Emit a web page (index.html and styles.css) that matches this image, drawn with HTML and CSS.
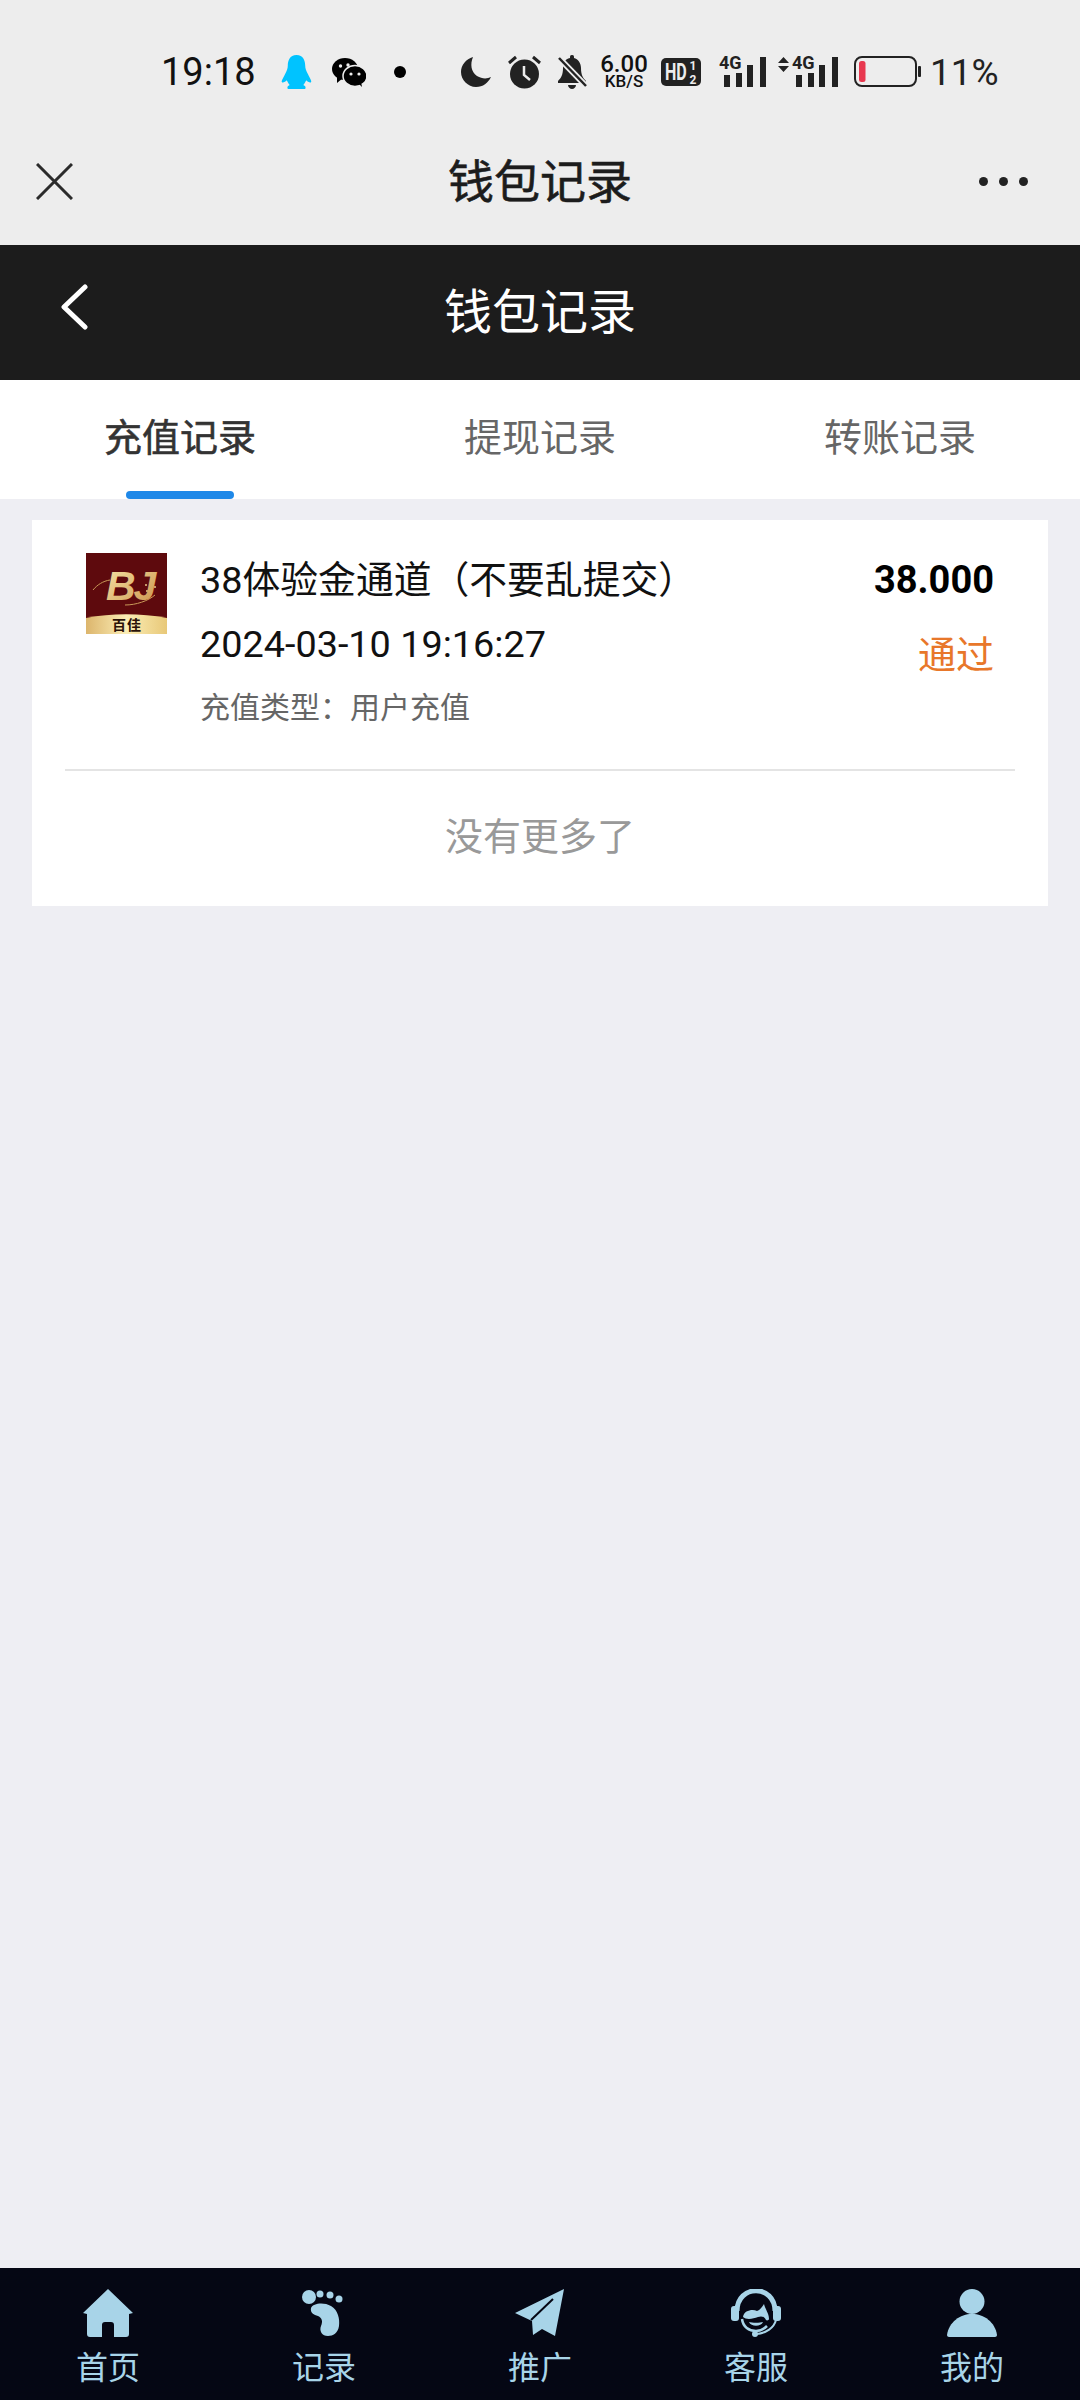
FILE: index.html
```html
<!doctype html>
<html lang="zh-CN">
<head>
    <meta charset="UTF-8">
    <meta name="viewport" content="width=device-width, initial-scale=1.0">
    <title>钱包记录</title>
    <link rel="stylesheet" href="styles.css">
</head>
<body>
<div class="page">
    <!-- status bar -->
    <div class="status">
        <span class="time">19:18</span>
        <svg class="st-qq" width="31" height="34" viewBox="0 0 32 35"><path fill="#00c3ff" d="M16 0C9 0 7 6 7 11C7 14 6 16 4 20C2 24 0 27 1 28C2 29 5 27 6 26C7 28 8 30 9 31C7 32 6 33 7 35H25C26 33 25 32 23 31C24 30 25 28 26 26C27 27 30 29 31 28C32 27 30 24 28 20C26 16 25 14 25 11C25 6 23 0 16 0Z"/></svg>
        <svg class="st-wx" width="34" height="29" viewBox="0 0 34 29"><ellipse cx="13" cy="11" rx="13" ry="11"/><path d="M5 18L5 25L11 20Z"/><ellipse cx="23" cy="18" rx="12" ry="10.500" fill="#000" stroke="#ededed" stroke-width="1.500"/><path d="M27 26L30 29L29 24Z"/><circle cx="8.500" cy="8" r="1.700" fill="#ededed"/><circle cx="16" cy="7" r="1.700" fill="#ededed"/><circle cx="19" cy="16" r="1.600" fill="#ededed"/><circle cx="27" cy="16" r="1.600" fill="#ededed"/></svg>
        <span class="st-dot"></span>
        <svg class="st-moon" width="30" height="30" viewBox="0 0 30 30"><path fill="#222" d="M12 0C5 2 0 8 0 15C0 23 7 30 15 30C22 30 27 26 30 20C26 22 21 22 16 19C10 15 9 7 12 0Z"/></svg>
        <svg class="st-alarm" width="33" height="34" viewBox="0 0 33 34"><circle cx="16.500" cy="19" r="14.500" fill="#222"/><path d="M1 8L8 2M32 8L25 2" stroke="#222" stroke-width="3"/><path d="M16 11V20L22 25" fill="none" stroke="#ededed" stroke-width="2.500"/></svg>
        <svg class="st-bell" width="31" height="34" viewBox="0 0 31 34"><path fill="#222" d="M15 0C13 0 13 1 13 3C8 4 6 8 6 13C6 20 4 23 1 26V28H29V26C26 23 24 20 24 13C24 8 21 4 17 3C17 1 17 0 15 0Z"/><path d="M11 30H19C19 32 17 34 15 34C13 34 11 32 11 30Z" fill="#222"/><path d="M2 3L29 31" stroke="#ededed" stroke-width="6"/><path d="M2 3L29 31" stroke="#222" stroke-width="2.500"/></svg>
        <div class="st-speed"><span class="num">6.00</span><span class="unit">KB/S</span></div>
        <svg class="st-hd" width="40" height="28" viewBox="0 0 40 28"><rect width="40" height="28" rx="5" fill="#222"/><text transform="translate(4 22) scale(.67 1)" class="hd-txt">HD</text><text x="32" y="11.500" class="hd-sub">1</text><text x="32" y="26" class="hd-sub">2</text></svg>
        <svg class="st-4g" width="47" height="40" viewBox="0 -8 47 40"><text x="0" y="13" class="g-txt">4G</text><path fill="#222" d="M5 19h6v12h-6zM17 17h6v14h-6zM28 9h6v22h-6zM41 1h6v30h-6z"/></svg>
        <svg class="st-4g2" width="60" height="40" viewBox="0 -8 60 40"><path fill="#222" d="M0 7L5.500 1L11 7ZM0 10H11L5.500 16Z"/><text x="14" y="13" class="g-txt">4G</text><path fill="#222" d="M18 19h6v12h-6zM30 17h6v14h-6zM41 9h6v22h-6zM54 1h6v30h-6z"/></svg>
        <svg class="st-bat" width="67" height="32" viewBox="0 0 67 32"><rect x="1" y="1" width="61" height="29" rx="7" fill="none" stroke="#222" stroke-width="2"/><rect x="5" y="5" width="6.500" height="21" rx="2.500" fill="#e8384f"/><rect x="64" y="10" width="3" height="11" rx="1" fill="#222"/></svg>
        <span class="pct">11%</span>
    </div>

    <!-- webview title -->
    <div class="webbar">
        <div class="webbar-left">
            <svg width="37" height="37" viewBox="0 0 37 37"><path d="M1 1L36 36M36 1L1 36" stroke="#2b2b2b" stroke-width="3"/></svg>
        </div>
        <div class="webbar-title">钱包记录</div>
        <div class="webbar-right"><i></i><i></i><i></i></div>
    </div>

    <!-- page head -->
    <div class="head">
        <svg class="head-back" width="28" height="46" viewBox="0 0 28 46"><path d="M25 3L4 23L25 43" fill="none" stroke="#fff" stroke-width="5" stroke-linecap="round" stroke-linejoin="round"/></svg>
        <div class="head-title">钱包记录</div>
    </div>

    <ul class="tabs">
        <li class="tab on">充值记录</li>
        <li class="tab">提现记录</li>
        <li class="tab">转账记录</li>
    </ul>

    <div class="main">
        <div class="card">
            <div class="row">
                <svg class="logo" width="81" height="81" viewBox="0 0 81 81">
                    <defs>
                        <linearGradient id="gold" x1="0" y1="0" x2="1" y2="1"><stop offset="0" stop-color="#f8e7a8"/><stop offset="1" stop-color="#c98f48"/></linearGradient>
                        <linearGradient id="band" x1="0" y1="0" x2="1" y2="0"><stop offset="0" stop-color="#dcb56c"/><stop offset="0.5" stop-color="#fbedb5"/><stop offset="1" stop-color="#e8c878"/></linearGradient>
                    </defs>
                    <rect width="81" height="81" fill="#5e0a0d"/>
                    <path d="M7 37C11 32 17 28 24 27M39 52C50 52 62 48 69 42" fill="none" stroke="#c99a58" stroke-width="1"/>
                    <g fill="#e6c98a"><circle cx="60" cy="32" r="1"/><circle cx="65" cy="35" r="1"/><circle cx="61" cy="38" r="1"/><circle cx="69" cy="34" r="1"/></g>
                    <text x="20" y="47" class="logo-bj" fill="url(#gold)">BJ</text>
                    <path d="M0 65C25 60 55 60 81 65V81H0Z" fill="url(#band)"/>
                    <text x="41" y="77" class="logo-cn">百佳</text>
                </svg>
                <div class="info">
                    <p class="info-title">38体验金通道（不要乱提交）</p>
                    <p class="info-date">2024-03-10 19:16:27</p>
                    <p class="info-type">充值类型：用户充值</p>
                </div>
                <div class="side">
                    <p class="amount">38.000</p>
                    <p class="state">通过</p>
                </div>
            </div>
            <div class="nomore">没有更多了</div>
        </div>
    </div>

    <!-- bottom nav -->
    <ul class="foot">
        <li>
            <svg width="50" height="48" viewBox="0 0 50 48"><path d="M25 0L50 24L46 25V45a3 3 0 0 1-3 3H31V36a3 3 0 0 0-3-3h-6a3 3 0 0 0-3 3V48H7a3 3 0 0 1-3-3V25L0 24Z"/></svg>
            <span>首页</span>
        </li>
        <li>
            <svg width="50" height="48" viewBox="0 0 50 48"><circle cx="10" cy="8" r="7"/><circle cx="21" cy="5" r="3.500"/><circle cx="31" cy="6" r="3.500"/><circle cx="40" cy="10" r="3.500"/><path d="M12 19C14 14 25 13 32 17C39 21 41 30 40 37C39 44 34 47 29 47C23 47 20 42 22 37C24 32 23 29 19 27C15 26 11 24 12 19Z"/></svg>
            <span>记录</span>
        </li>
        <li>
            <svg width="50" height="48" viewBox="0 0 50 48">
                <path d="M49 0L40 47L27 40L18 46L17 32L0 24Z"/>
                <path class="cut-line" d="M38 10L16 31"/>
            </svg>
            <span>推广</span>
        </li>
        <li>
            <svg width="50" height="48" viewBox="0 0 50 48">
                <path class="ln" d="M6 22C6 -5 44 -5 44 22" stroke-width="5"/>
                <rect x="0" y="17" width="8" height="15" rx="3"/><rect x="42" y="17" width="8" height="15" rx="3"/>
                <path d="M12 28C13 21 22 20 26 22C29 21 31 18 33 15C34 20 38 24 38 30C38 31 36 32 35 31C33 27 30 27 27 28C22 30 15 31 12 28Z"/>
                <path class="ln" d="M11 30C12 38 18 42 25 42C29 42 33 40 36 37" stroke-width="2.500"/>
                <path d="M18 33C21 34 29 34 32 33C30 38 20 38 18 33Z"/>
                <path class="ln" d="M45 31C43 39 35 44 26 45" stroke-width="2"/>
                <circle cx="24" cy="45" r="3"/>
            </svg>
            <span>客服</span>
        </li>
        <li>
            <svg width="50" height="48" viewBox="0 0 50 48"><circle cx="25" cy="12.500" r="12.500"/><path d="M0 46C2 33 13 25 25 25C37 25 48 33 50 46C50 47 49 48 48 48H2C1 48 0 47 0 46Z"/></svg>
            <span>我的</span>
        </li>
    </ul>
</div>
</body>
</html>
```

FILE: styles.css
```css
*{
    margin: 0;
    padding: 0;
    list-style: none;
    box-sizing: border-box;
}
body{
    font-family: Roboto, "Noto Sans CJK SC", sans-serif;
    background-color: #eeeef3;
}
.page{
    width: 1080px;
    height: 2400px;
    display: flex;
    flex-direction: column;
}

/* status bar */
.status{
    height: 117px;
    padding: 27px 0 0 161px;
    background-color: #ededed;
    display: flex;
    align-items: center;
    flex-shrink: 0;
}
.time{
    width: 95px;
    font-size: 38px;
    color: #111;
}
.st-qq{ margin-left: 25px; }
.st-wx{ margin-left: 20px; }
.st-dot{
    width: 12px;
    height: 12px;
    margin-left: 28px;
    border-radius: 50%;
    background-color: #000;
}
.st-moon{ margin-left: 55px; }
.st-alarm{ margin-left: 17px; }
.st-bell{ margin-left: 16px; }
.st-speed{
    width: 50px;
    margin-left: 11px;
    display: flex;
    flex-direction: column;
    align-items: center;
    color: #111;
}
.st-speed .num{
    font-size: 24px;
    line-height: 19px;
    font-weight: 500;
}
.st-speed .unit{
    font-size: 17px;
    line-height: 15px;
    font-weight: 500;
}
.st-hd{ margin-left: 12px; }
.st-4g{
    margin-left: 18px;
    margin-bottom: 8px;
}
.st-4g2{
    margin-left: 12px;
    margin-bottom: 8px;
}
.st-bat{ margin-left: 16px; }
.pct{
    margin-left: 9px;
    font-size: 37px;
    color: #222;
}
.hd-txt{
    font-size: 24px;
    font-weight: 700;
    fill: #ededed;
}
.hd-sub{
    font-size: 12px;
    font-weight: 700;
    text-anchor: middle;
    fill: #ededed;
}
.g-txt{
    font-size: 18px;
    font-weight: 700;
    fill: #222;
}

/* webview title */
.webbar{
    height: 128px;
    padding: 0 52px 0 36px;
    background-color: #ededed;
    display: grid;
    grid-template-columns: 1fr 184px 1fr;
    align-items: center;
    flex-shrink: 0;
}
.webbar-left{
    display: flex;
}
.webbar-title{
    padding-bottom: 6px;
    margin-left: 8px;
    white-space: nowrap;
    font-size: 46px;
    color: #1c1c1c;
    -webkit-text-stroke: 0.6px #1c1c1c;
}
.webbar-right{
    display: flex;
    justify-content: flex-end;
    gap: 11px;
}
.webbar-right i{
    width: 9px;
    height: 9px;
    border-radius: 50%;
    background-color: #222;
}

/* page head */
.head{
    height: 135px;
    background-color: #1c1c1c;
    display: grid;
    grid-template-columns: 1fr auto 1fr;
    align-items: center;
    flex-shrink: 0;
}
.head-back{
    margin: 0 0 12px 60px;
}
.head-title{
    padding-bottom: 9px;
    font-size: 48px;
    color: #fff;
}

/* tabs */
.tabs{
    height: 119px;
    background-color: #fff;
    display: flex;
    flex-shrink: 0;
}
.tab{
    flex: 1;
    position: relative;
    line-height: 116px;
    text-align: center;
    font-size: 38px;
    color: #666;
}
.tab.on{
    color: #333;
    -webkit-text-stroke: 0.6px #333;
}
.tab.on::after{
    content: "";
    width: 108px;
    height: 8px;
    border-radius: 4px;
    background-color: #1e88e8;
    position: absolute;
    left: 126px;
    bottom: 0;
}

/* record card */
.main{
    flex: 1;
    padding: 21px 32px 0;
    background-color: #eeeef3;
}
.card{
    height: 386px;
    padding: 0 33px;
    background-color: #fff;
}
.row{
    height: 251px;
    padding: 28px 21px 0;
    border-bottom: 2px solid #e4e4e4;
    display: flex;
    align-items: flex-start;
}
.logo{
    margin-top: 5px;
    flex-shrink: 0;
}
.info{
    flex: 1;
    margin-left: 33px;
    line-height: 64px;
}
.info-title{
    font-size: 37.8px;
    color: #111;
}
.info-date{
    font-size: 37.8px;
    color: #111;
}
.info-type{
    font-size: 30px;
    color: #666;
}
.side{
    text-align: right;
}
.amount{
    line-height: 64px;
    font-size: 38px;
    font-weight: 700;
    color: #000;
}
.state{
    margin-top: 11px;
    line-height: 64px;
    font-size: 38px;
    color: #e8772a;
}
.nomore{
    line-height: 133px;
    text-align: center;
    font-size: 38px;
    color: #999;
}
.logo-bj{
    font-size: 41px;
    font-weight: 700;
    font-style: italic;
    font-family: "Liberation Sans", sans-serif;
    letter-spacing: -2px;
}
.logo-cn{
    font-size: 14px;
    font-weight: 700;
    text-anchor: middle;
    fill: #2a1208;
    letter-spacing: 1px;
}

/* bottom nav */
.foot{
    height: 132px;
    padding-top: 21px;
    background-color: #050714;
    display: flex;
    flex-shrink: 0;
}
.foot li{
    flex: 1;
    display: flex;
    flex-direction: column;
    align-items: center;
}
.foot svg{
    fill: #a8d4e8;
}
.foot .ln{
    fill: none;
    stroke: #a8d4e8;
}
.foot .cut-line{
    fill: none;
    stroke: #050714;
    stroke-width: 2;
}
.foot span{
    margin-top: 9px;
    font-size: 32px;
    line-height: 44px;
    color: #a8d4e8;
}
```
